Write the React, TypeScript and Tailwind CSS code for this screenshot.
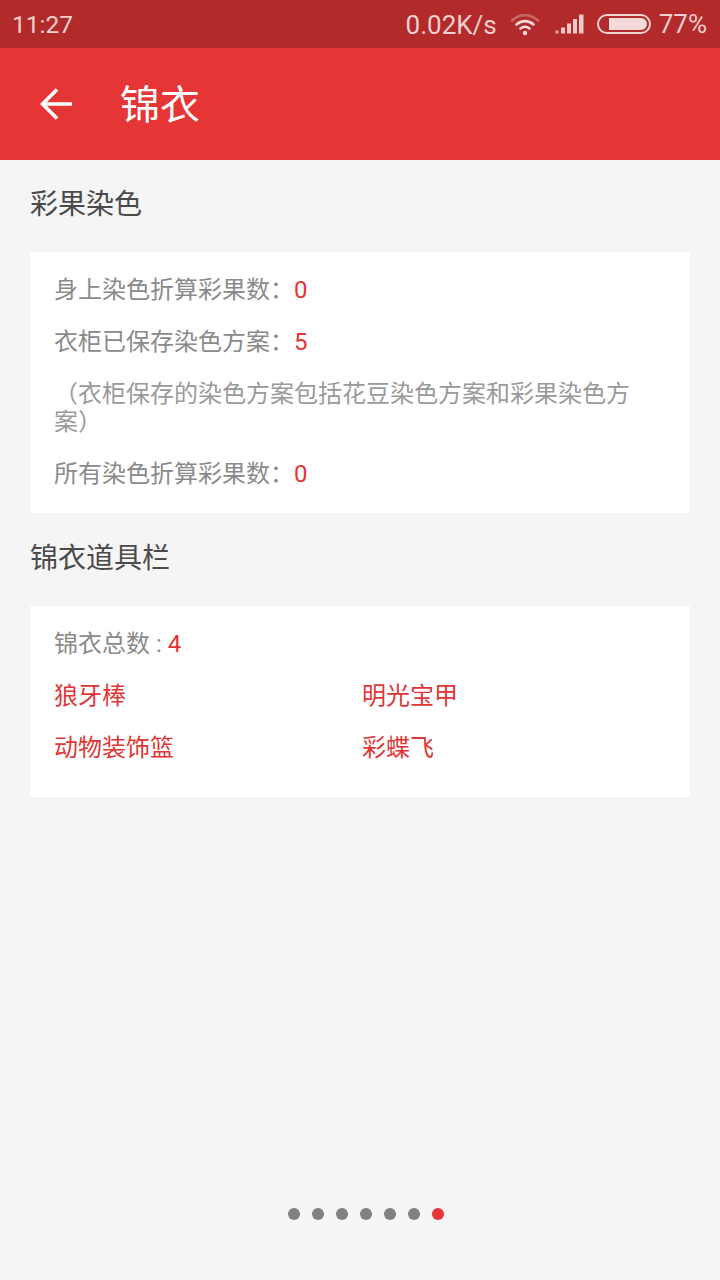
import React from 'react';

const FONT = 'font-["Roboto","Noto_Sans_CJK_SC",sans-serif]';

const Red = ({ children }: { children: React.ReactNode }) => (
  <span className="text-[#e03636]">{children}</span>
);

const WifiIcon = () => (
  <svg width="32" height="24" viewBox="0 0 32 24" fill="none" strokeLinecap="round">
    <path d="M3 8.5C10.5 1.5 21.5 1.5 29 8.5" stroke="#ffffff" strokeOpacity="0.3" strokeWidth="2.6" />
    <path d="M7.5 12.5C12.5 8 19.5 8 24.5 12.5" stroke="#f7dcdc" strokeWidth="2.6" />
    <path d="M11.5 16.5C14.2 14.4 17.8 14.4 20.5 16.5" stroke="#f7dcdc" strokeWidth="2.6" />
    <circle cx="16" cy="21" r="2.2" fill="#f7dcdc" />
  </svg>
);

const SignalIcon = () => (
  <svg width="30" height="22" viewBox="0 0 30 22" fill="#f0c8c8">
    <rect x="0.5" y="17.5" width="3" height="3" opacity="0.8" />
    <rect x="6" y="14.5" width="4" height="6" />
    <rect x="12" y="10.5" width="4" height="10" />
    <rect x="18" y="6" width="4" height="14.5" />
    <rect x="24" y="1.5" width="4.5" height="19" />
  </svg>
);

const BatteryIcon = () => (
  <div className="w-[54px] h-[20px] rounded-full border-2 border-[#f3d2d2] p-[2px] flex justify-end">
    <div className="w-[38px] h-full rounded-r-full bg-[#f3d9d9]" />
  </div>
);

const StatusBar = () => (
  <div className="h-12 bg-[#b22a2a] flex items-center pl-3 pr-[13px] text-[#f3cfcf] text-[24.5px]">
    <span className="pt-[3px]">11:27</span>
    <div className="ml-auto flex items-center">
      <span className="text-[26px] pt-[3px]">0.02K/s</span>
      <div className="ml-3"><WifiIcon /></div>
      <div className="ml-[14px]"><SignalIcon /></div>
      <div className="ml-[12px]"><BatteryIcon /></div>
      <span className="ml-2 text-[26px]">77%</span>
    </div>
  </div>
);

const Toolbar = () => (
  <div className="h-28 bg-[#e53535] flex items-center pl-10 text-white">
    <svg width="32" height="32" viewBox="0 0 32 32" fill="none" stroke="#ffffff" strokeWidth="3.6">
      <path d="M33 16H2" />
      <path d="M17 1.5L2.5 16L17 30.5" />
    </svg>
    <span className="ml-[48px] pt-1 text-[40px] leading-none">锦衣</span>
  </div>
);

const Row = ({ label, value }: { label: string; value: string }) => (
  <div className="h-[52px] flex items-center text-[24px] text-[#8a8a8a] whitespace-pre">
    {label}
    <Red>{value}</Red>
  </div>
);

const SectionTitle = ({ children, className }: { children: React.ReactNode; className: string }) => (
  <div className={`pl-[30px] text-[28px] leading-[40px] text-[#4a4a4a] ${className}`}>{children}</div>
);

const Dots = () => (
  <div className="absolute bottom-[60px] left-[288px] flex gap-3">
    {[0, 1, 2, 3, 4, 5].map((i) => (
      <div key={i} className="w-3 h-3 rounded-full bg-[#808080]" />
    ))}
    <div className="w-3 h-3 rounded-full bg-[#e53535]" />
  </div>
);

export default function App() {
  return (
    <div className={`${FONT} relative w-[720px] h-[1280px] bg-[#f5f5f5] overflow-hidden`}>
      <StatusBar />
      <Toolbar />
      <SectionTitle className="h-[92px] pt-[25px]">彩果染色</SectionTitle>
      <div className="mx-[30px] bg-white px-6 pt-3 h-[261px]">
        <Row label="身上染色折算彩果数：" value="0" />
        <Row label="衣柜已保存染色方案：" value="5" />
        <div className="text-[24px] leading-[28px] text-[#9a9a9a] pr-9 py-3">
          （衣柜保存的染色方案包括花豆染色方案和彩果染色方案）
        </div>
        <Row label="所有染色折算彩果数：" value="0" />
      </div>
      <SectionTitle className="h-[93px] pt-[26px]">锦衣道具栏</SectionTitle>
      <div className="mx-[30px] bg-white px-6 pt-3 h-[191px]">
        <Row label="锦衣总数 : " value="4" />
        <div className="grid grid-cols-2 text-[24px] text-[#e03636]">
          <div className="h-[52px] flex items-center">狼牙棒</div>
          <div className="h-[52px] flex items-center pl-[2px]">明光宝甲</div>
          <div className="h-[52px] flex items-center">动物装饰篮</div>
          <div className="h-[52px] flex items-center pl-[2px]">彩蝶飞</div>
        </div>
      </div>
      <Dots />
    </div>
  );
}
